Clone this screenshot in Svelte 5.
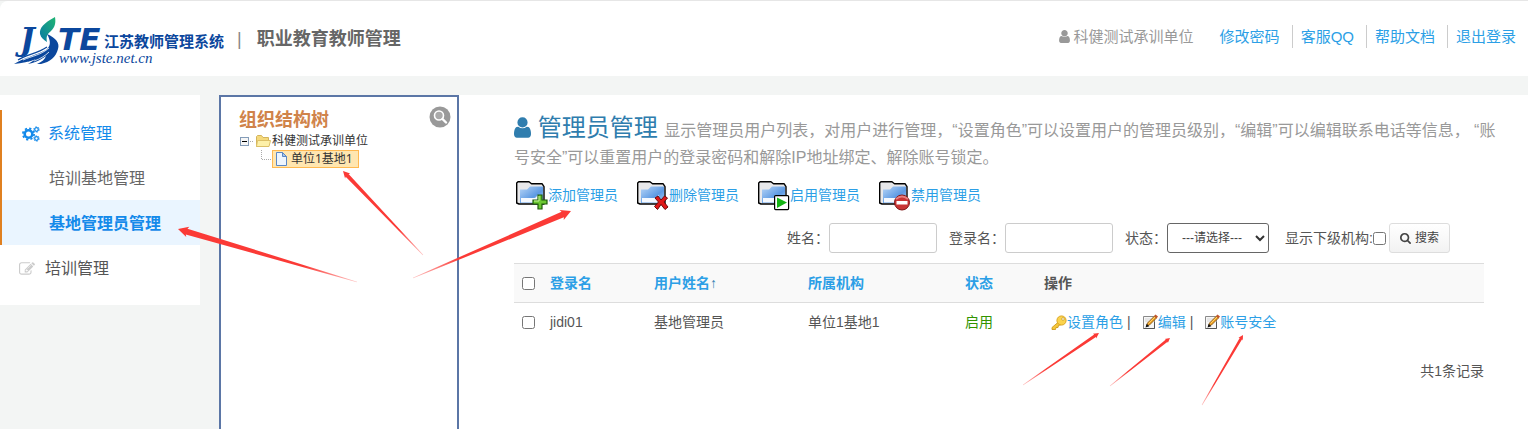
<script lang="ts">
    let keyword = $state("");
    let loginName = $state("");
    let status = $state("");
    let includeChildren = $state(false);

    const topLinks = ["修改密码", "客服QQ", "帮助文档", "退出登录"];

    const tools = [
        { label: "添加管理员", badge: "add" },
        { label: "删除管理员", badge: "remove" },
        { label: "启用管理员", badge: "play" },
        { label: "禁用管理员", badge: "stop" },
    ];

    let rows = $state([
        { login: "jidi01", name: "基地管理员", org: "单位1基地1", state: "启用", checked: false },
    ]);

    // tail, tip, shaft half width at the head
    const arrows = [
        { x1: 357, y1: 282, x2: 178, y2: 229, w: 3 },
        { x1: 423, y1: 255, x2: 343, y2: 171, w: 2 },
        { x1: 413, y1: 278, x2: 571, y2: 211, w: 3 },
        { x1: 1023, y1: 385, x2: 1099, y2: 333, w: 1.6 },
        { x1: 1110, y1: 386, x2: 1170, y2: 338, w: 1.4 },
        { x1: 1202, y1: 405, x2: 1243, y2: 335, w: 1.4 },
    ];

    function arrowPoints(a: { x1: number; y1: number; x2: number; y2: number; w: number }) {
        const len = Math.hypot(a.x2 - a.x1, a.y2 - a.y1);
        const ux = (a.x2 - a.x1) / len;
        const uy = (a.y2 - a.y1) / len;
        const at = (back: number, side: number) =>
            `${a.x2 - ux * back - uy * side},${a.y2 - uy * back + ux * side}`;
        const neck = a.w * 3;
        const barb = a.w * 3.4;
        return [
            at(len, 0.3), at(neck, a.w), at(barb, a.w * 1.8), at(0, 0),
            at(barb, -a.w * 1.8), at(neck, -a.w), at(len, -0.3),
        ].join(" ");
    }
</script>

{#snippet userIcon()}
    <svg class="user-icon" viewBox="0 128 1280 1536" aria-hidden="true">
        <path d="M1280 1399q0 109-62.5 187t-150.5 78h-854q-88 0-150.5-78t-62.5-187q0-85 8.5-160.5t31.5-152 58.5-131 94-89 134.5-34.5q131 128 313 128t313-128q76 0 134.5 34.5t94 89 58.5 131 31.5 152 8.5 160.5zm-256-887q0 159-112.5 271.5t-271.5 112.5-271.5-112.5-112.5-271.5 112.5-271.5 271.5-112.5 271.5 112.5 112.5 271.5z" />
    </svg>
{/snippet}

{#snippet noteIcon()}
    <svg class="small-icon" viewBox="0 0 16 16" aria-hidden="true">
        <path d="M1.500 2.500h10l1 1v11h-11z" fill="#f7f7f7" stroke="#8a8a8a" />
        <path d="M1.500 14.500h11V8" fill="none" stroke="#555" />
        <path d="M3 5h6M3 7h4" stroke="#d5d5d5" />
        <path d="M4.500 12l1-3 7-7 2 2-7 7z" fill="#f0a020" stroke="#7a4c10" stroke-width=".8" />
        <path d="M6.500 9.500l6.500-6.500" stroke="#ffd26a" />
        <path d="M3.500 13.500l1.200-3.800 2.600 2.600z" fill="#111" />
        <path d="M12 2l1.500-1.500 2.500 2-1.500 2z" fill="#c0562b" />
    </svg>
{/snippet}

<div class="page">
    <header>
        <svg class="logo" viewBox="0 0 212 54" role="img" aria-label="JSTE">
            <defs>
                <linearGradient id="leaf" x1="1" y1="0" x2="0" y2="1">
                    <stop offset="0" stop-color="#1fb573" />
                    <stop offset="1" stop-color="#0878a5" />
                </linearGradient>
            </defs>
            <text class="logo-j" x="6" y="36">J</text>
            <text class="logo-te" x="44" y="36">TE</text>
            <path d="M41 3C30 9 25 14 26 20c1 4 4 6 7 8-1-5 0-8 4-11 4-4 5-8 4-14z" fill="url(#leaf)" />
            <path d="M33 20c9 4 13 9 11 15-2 8-8 13-17 15h-4c5-2 8-5 9-8-7 5-12 7-18 8l8-5c-7 3-14 4-22 5 9-6 23-9 32-14 5-4 5-9 1-16z" fill="#0b479d" />
            <path d="M4 46c9-6 19-6 29-13M14 47c9-4 14-5 20-10" stroke="#0b479d" stroke-width="1.200" fill="none" />
            <path d="M9 46c9-4 18-5 26-12M20 47c6-2 11-5 15-9" stroke="#fff" stroke-width=".8" fill="none" />
            <text class="logo-name" x="90" y="33">江苏教师管理系统</text>
            <text class="logo-url" x="45" y="49">www.jste.net.cn</text>
        </svg>
        <span class="divider">|</span>
        <strong class="subtitle">职业教育教师管理</strong>
        <div class="top-bar">
            <span class="account">{@render userIcon()}科健测试承训单位</span>
            <nav class="top-links">
                {#each topLinks as link}
                    <a href="#top">{link}</a>
                {/each}
            </nav>
        </div>
    </header>

    <div class="main">
        <nav class="sidebar">
            <div class="group">
                <a class="item active" href="#system">
                    <svg class="cogs" viewBox="0 0 18 16" aria-hidden="true">
                        <g fill="none" stroke="currentColor">
                            <circle cx="6.500" cy="8" r="3.800" stroke-width="2.600" />
                            <circle cx="6.500" cy="8" r="5.600" stroke-width="1.800" stroke-dasharray="2.200" />
                            <circle cx="14.500" cy="3.500" r="1.800" stroke-width="1.300" />
                            <circle cx="14.500" cy="3.500" r="2.700" stroke-width="1" stroke-dasharray="1.400" />
                            <circle cx="14.500" cy="12.500" r="1.800" stroke-width="1.300" />
                            <circle cx="14.500" cy="12.500" r="2.700" stroke-width="1" stroke-dasharray="1.400" />
                        </g>
                    </svg>
                    系统管理
                </a>
                <a class="item sub" href="#base">培训基地管理</a>
                <a class="item sub current" href="#admins">基地管理员管理</a>
            </div>
            <a class="item train" href="#training">
                <svg class="pencil" viewBox="0 0 1792 1792" aria-hidden="true">
                    <path d="M888 1184l116-116-152-152-116 116v56h96v96h56zm440-720q-16-16-33 1l-350 350q-17 17-1 33t33-1l350-350q17-17 1-33zm80 594v190q0 119-84.5 203.5t-203.5 84.5h-832q-119 0-203.5-84.5t-84.5-203.5v-832q0-119 84.5-203.5t203.5-84.5h832q63 0 117 25 15 7 18 23 3 17-9 29l-49 49q-14 14-32 8-23-6-45-6h-832q-66 0-113 47t-47 113v832q0 66 47 113t113 47h832q66 0 113-47t47-113v-126q0-13 9-22l64-64q15-15 35-7t20 29zm-96-738l288 288-672 672h-288v-288zm444 132l-92 92-288-288 92-92q28-28 68-28t68 28l152 152q28 28 28 68t-28 68z" />
                </svg>
                培训管理
            </a>
        </nav>

        <aside class="tree">
            <div class="tree-head">
                <h2>组织结构树</h2>
                <button class="tree-search" aria-label="搜索">
                    <svg viewBox="0 0 22 22">
                        <circle cx="11" cy="11" r="10.500" fill="#999" />
                        <circle cx="10" cy="9.500" r="4.500" fill="#aaa" stroke="#fff" stroke-width="1.600" />
                        <path d="M13.500 13l3.500 3.500" stroke="#fff" stroke-width="2.400" stroke-linecap="round" />
                    </svg>
                </button>
            </div>
            <div class="node">
                <svg class="toggle" viewBox="0 0 15 16" aria-hidden="true">
                    <rect x="1.500" y="4.500" width="8" height="8" fill="#f6f6f6" stroke="#849cb8" />
                    <path d="M3 8.500h5" stroke="#000" />
                    <path d="M11 8.500h4" stroke="#aaa" stroke-dasharray="1" />
                </svg>
                <svg class="small-icon" viewBox="0 0 16 16" aria-hidden="true">
                    <path d="M1.500 13.500v-10l1-1h4l1.500 2h5.500v9z" fill="#f5d97c" stroke="#d3b45c" />
                    <path d="M1.500 13.500l1-6h13l-1.500 6z" fill="#fdf0a8" stroke="#dcc067" />
                </svg>
                <span>科健测试承训单位</span>
            </div>
            <div class="node child">
                <svg class="branch" viewBox="0 0 12 18" aria-hidden="true">
                    <path d="M1.500 0v9.500H12" fill="none" stroke="#aaa" stroke-dasharray="1" />
                </svg>
                <span class="selected">
                    <svg class="small-icon" viewBox="0 0 16 16" aria-hidden="true">
                        <path d="M3.500 1.500h6l4 4v9h-10z" fill="#eef5fd" stroke="#5b87c4" />
                        <path d="M9.500 1.500v4h4z" fill="#a9c8ec" stroke="#5b87c4" />
                    </svg>
                    单位1基地1
                </span>
            </div>
        </aside>

        <main>
            <h1>
                {@render userIcon()}
                管理员管理
                <small>显示管理员用户列表，对用户进行管理，“设置角色”可以设置用户的管理员级别，“编辑”可以编辑联系电话等信息， “账号安全”可以重置用户的登录密码和解除IP地址绑定、解除账号锁定。</small>
            </h1>

            <div class="tools">
                {#each tools as tool}
                    <a href="#tool">
                        <svg class="folder" viewBox="0 0 32 32" aria-hidden="true">
                            <defs>
                                <linearGradient id="blue-{tool.badge}" x1="0" y1="0" x2="1" y2="1">
                                    <stop offset="0" stop-color="#b7d5f7" />
                                    <stop offset=".6" stop-color="#5d9ae3" />
                                    <stop offset="1" stop-color="#a8cdf5" />
                                </linearGradient>
                            </defs>
                            <path d="M.700 24V4L2 2.700h11l2.500 2H26l2 3V25H3z" fill="#e8e8ea" stroke="#000" stroke-width="1.400" stroke-linejoin="round" />
                            <path d="M4 10.500h7l3-3h13V24H4z" fill="url(#blue-{tool.badge})" />
                            <path d="M5 19h14l3-3v7.500H5z" fill="#f5f9ff" />
                            {#if tool.badge === "add"}
                                <path d="M22 16h4v5h5v4h-5v5h-4v-5h-5v-4h5z" fill="#6cc832" stroke="#1d5d0b" stroke-width="1.200" />
                                <path d="M23 17v5h-5" fill="none" stroke="#c7f29d" />
                            {:else if tool.badge === "remove"}
                                <path d="M18 19l3-2 3 4 3.500-4 3 2-3.500 4 4 5-3 2.500-4-5-3.500 5-3-3 4-4.500z" fill="#e01818" stroke="#6d0909" />
                            {:else if tool.badge === "play"}
                                <rect x="16.600" y="16.600" width="14" height="14" rx="1" fill="#fff" stroke="#000" stroke-width="1.200" />
                                <path d="M19 18.500l10 5-10 5.500z" fill="#14b414" />
                            {:else}
                                <circle cx="23" cy="23.500" r="7.500" fill="#c93434" stroke="#7e1414" />
                                <path d="M17 20q6-5 12 0" stroke="#e58080" stroke-width="2" fill="none" />
                                <rect x="17.500" y="22" width="11" height="3.500" fill="#fff" />
                            {/if}
                        </svg>
                        {tool.label}
                    </a>
                {/each}
            </div>

            <form class="filters" onsubmit={(e) => e.preventDefault()}>
                <label for="name">姓名：</label>
                <input id="name" type="text" bind:value={keyword} />
                <label for="login">登录名：</label>
                <input id="login" type="text" bind:value={loginName} />
                <label for="status">状态：</label>
                <div class="select">
                    <select id="status" bind:value={status}>
                        <option value="">---请选择---</option>
                        <option value="on">启用</option>
                        <option value="off">禁用</option>
                    </select>
                    <svg class="chevron" viewBox="0 0 10 7" aria-hidden="true">
                        <path d="M1 1l4 4 4-4" fill="none" stroke="#333" stroke-width="2" />
                    </svg>
                </div>
                <label for="children">显示下级机构:</label>
                <input id="children" type="checkbox" bind:checked={includeChildren} />
                <button class="search">
                    <svg viewBox="0 0 1664 1792" aria-hidden="true">
                        <path d="M1152 832q0-185-131.500-316.500t-316.500-131.500-316.500 131.500-131.500 316.500 131.500 316.500 316.500 131.500 316.500-131.500 131.500-316.500zm512 832q0 52-38 90t-90 38q-54 0-90-38l-343-342q-179 124-399 124-143 0-273.500-55.500t-225-150-150-225-55.500-273.500 55.500-273.500 150-225 225-150 273.500-55.500 273.500 55.500 225 150 150 225 55.500 273.500q0 220-124 399l343 343q37 37 37 90z" />
                    </svg>
                    搜索
                </button>
            </form>

            <table>
                <thead>
                    <tr>
                        <th class="c-check"><input type="checkbox" aria-label="全选" /></th>
                        <th class="c-login"><a href="#sort">登录名</a></th>
                        <th class="c-name"><a href="#sort">用户姓名</a><span class="sort">↑</span></th>
                        <th class="c-org"><a href="#sort">所属机构</a></th>
                        <th class="c-state"><a href="#sort">状态</a></th>
                        <th>操作</th>
                    </tr>
                </thead>
                <tbody>
                    {#each rows as row}
                        <tr>
                            <td><input type="checkbox" aria-label={row.login} bind:checked={row.checked} /></td>
                            <td>{row.login}</td>
                            <td>{row.name}</td>
                            <td>{row.org}</td>
                            <td class="on">{row.state}</td>
                            <td>
                                <div class="actions">
                                    <a href="#role">
                                        <svg class="small-icon" viewBox="0 0 16 16" aria-hidden="true">
                                            <path d="M8 7.500L1 13.500v2h3.500l.5-2h2l.5-2 3-1z" fill="#f5c73c" stroke="#c8920f" stroke-width=".8" />
                                            <circle cx="10.500" cy="6.500" r="4.600" fill="#fbd34d" stroke="#d79f1a" stroke-width=".9" />
                                            <circle cx="12" cy="5" r="1.300" fill="#fff" stroke="#b8860b" stroke-width=".6" />
                                        </svg>设置角色</a>
                                    <span>|</span>
                                    <a href="#edit">{@render noteIcon()}编辑</a>
                                    <span>|</span>
                                    <a href="#safe">{@render noteIcon()}账号安全</a>
                                </div>
                            </td>
                        </tr>
                    {/each}
                </tbody>
            </table>
            <p class="total">共{rows.length}条记录</p>
        </main>
    </div>

    <svg class="arrows" aria-hidden="true">
        {#each arrows as a, i}
            <linearGradient id="fade-{i}" gradientUnits="userSpaceOnUse" x1={a.x1} y1={a.y1} x2={a.x2} y2={a.y2}>
                <stop offset="0" stop-color="#fb3a36" stop-opacity=".3" />
                <stop offset=".3" stop-color="#fb3a36" />
            </linearGradient>
            <polygon points={arrowPoints(a)} fill="url(#fade-{i})" />
        {/each}
    </svg>
</div>

<style>
    :global(body) {
        background: #f3f5f4;
        overflow: hidden;
    }

    .page {
        position: relative;
        display: flex;
        flex-direction: column;
        min-height: 100vh;
        box-sizing: border-box;
        border-top: 1px solid #e6e6e6;
        color: #555;
        font-family: "Liberation Sans", "Noto Sans CJK SC", sans-serif;
        font-size: 14px;
        line-height: 20px;
    }

    a {
        color: #2c9fe6;
        text-decoration: none;
    }

    svg {
        flex: none;
    }

    .user-icon {
        fill: currentColor;
    }

    .small-icon {
        width: 16px;
        height: 16px;
    }

    input[type="checkbox"] {
        width: 13px;
        height: 13px;
        margin: 0;
    }

    header {
        display: flex;
        align-items: center;
        height: 75px;
        padding: 0 12px 0 14px;
        background: #fff;
        border-top-left-radius: 8px;
    }

    .logo {
        width: 212px;
        height: 54px;
        margin-top: 4px;
    }

    .logo-j {
        font: italic bold 31px "DejaVu Serif", serif;
        fill: #0b479d;
    }

    .logo-te {
        font: italic bold 31px "DejaVu Sans", sans-serif;
        fill: #0b479d;
    }

    .logo-name {
        font: bold 15px "Noto Sans CJK SC", sans-serif;
        fill: #0b479d;
    }

    .logo-url {
        font: italic 15px "Liberation Serif", serif;
        fill: #0b479d;
    }

    .divider {
        padding: 0 15px 0 11px;
        color: #888;
        font-size: 18px;
    }

    .subtitle {
        flex: 1;
        color: #666;
        font-size: 18px;
    }

    .top-bar {
        display: flex;
        padding-bottom: 4px;
        font-size: 15px;
        line-height: 23px;
    }

    .account {
        display: flex;
        align-items: center;
        gap: 4px;
        color: #999;
    }

    .account .user-icon {
        width: 11px;
        height: 13px;
    }

    .top-links {
        display: flex;
        padding-left: 18px;
    }

    .top-links a {
        padding: 0 12px 0 8px;
        border-right: 1px solid #ccc;
    }

    .top-links a:last-child {
        padding-right: 0;
        border: none;
    }

    .main {
        display: flex;
        flex: 1;
        align-items: stretch;
        padding-top: 19px;
    }

    .sidebar {
        flex: none;
        align-self: flex-start;
        width: 200px;
        padding: 15px 0;
        background: #fff;
        font-size: 16px;
    }

    .group {
        border-left: 2px solid #e08020;
    }

    .item {
        display: flex;
        align-items: center;
        box-sizing: border-box;
        height: 45px;
        padding-top: 2px;
        padding-left: 20px;
        gap: 8px;
        color: #555;
    }

    .item.active {
        color: #148aea;
    }

    .item.sub {
        padding-left: 47px;
        color: #666;
    }

    .item.current {
        background: #eaf5ff;
        color: #148aea;
        font-weight: bold;
    }

    .item.train {
        padding-left: 19px;
        gap: 10px;
    }

    .cogs {
        width: 18px;
        height: 16px;
    }

    .pencil {
        width: 16px;
        height: 16px;
        fill: #ccc;
    }

    .tree {
        flex: none;
        box-sizing: border-box;
        width: 240px;
        margin-left: 19px;
        padding: 9px 6px 0 18px;
        border: 2px solid #5b76a6;
        border-bottom: none;
        background: #fff;
        color: #333;
        font-family: "Noto Sans", "Noto Sans CJK SC", sans-serif;
        font-size: 12px;
    }

    .tree-head {
        display: flex;
        justify-content: space-between;
        height: 26px;
    }

    .tree h2 {
        margin: 0;
        color: #d0834a;
        font-size: 18px;
        line-height: 26px;
    }

    .tree-search {
        width: 22px;
        height: 22px;
        padding: 0;
        border: none;
        background: none;
    }

    .tree-search svg {
        display: block;
    }

    .node {
        display: flex;
        align-items: center;
        height: 18px;
        line-height: 16px;
        gap: 1px;
    }

    .toggle {
        width: 15px;
        height: 16px;
    }

    .node.child {
        padding-left: 21px;
        gap: 0;
    }

    .branch {
        width: 12px;
        height: 18px;
    }

    .selected {
        display: flex;
        gap: 2px;
        padding-right: 5px;
        border: 1px solid #ffb951;
        background: #ffe6b0;
    }

    main {
        flex: 1;
        min-width: 0;
        padding: 21px 44px 0 55px;
        background: #fff;
    }

    h1 {
        margin: 0 -16px 0 0;
        color: #2f7dae;
        font-size: 24px;
        font-weight: normal;
        line-height: 24px;
    }

    h1 .user-icon {
        width: 17px;
        height: 21px;
        vertical-align: -2px;
    }

    h1 small {
        color: #999;
        font-size: 16px;
        line-height: 24px;
    }

    .tools {
        display: flex;
        gap: 19px;
        padding: 9px 0 0 2px;
    }

    .tools a {
        display: flex;
        align-items: center;
        line-height: 30px;
    }

    .folder {
        width: 32px;
        height: 32px;
    }

    .filters {
        display: flex;
        align-items: center;
        justify-content: flex-end;
        margin: 12px 34px 10px 0;
    }

    .filters input[type="text"] {
        box-sizing: border-box;
        width: 108px;
        height: 30px;
        margin-right: 12px;
        border: 1px solid #ccc;
        border-radius: 3px;
    }

    .select {
        position: relative;
        margin-right: 16px;
    }

    .select select {
        display: block;
        box-sizing: border-box;
        width: 102px;
        height: 30px;
        padding: 0 14px;
        border: 1px solid #666;
        border-radius: 3px;
        appearance: none;
        background: #fff;
        color: #444;
        font: inherit;
        font-size: 12px;
    }

    .chevron {
        position: absolute;
        top: 12px;
        right: 4px;
        width: 10px;
        height: 7px;
        pointer-events: none;
    }

    .search {
        display: flex;
        align-items: center;
        gap: 4px;
        height: 30px;
        margin-left: 3px;
        padding: 0 10px;
        border: 1px solid #ddd;
        border-radius: 3px;
        background: linear-gradient(#fff, #f2f2f2);
        color: #444;
        font: inherit;
        font-size: 12px;
    }

    .search svg {
        width: 11px;
        height: 12px;
        fill: #444;
    }

    table {
        width: 100%;
        table-layout: fixed;
        border-collapse: collapse;
        text-align: left;
    }

    th,
    td {
        height: 38px;
        padding: 0 8px;
    }

    thead tr {
        border-top: 1px solid #ddd;
        border-bottom: 1px solid #ddd;
        background: #f9f9f9;
    }

    th input,
    td input {
        display: block;
    }

    .c-check {
        width: 12px;
    }

    .c-login {
        width: 88px;
    }

    .c-name {
        width: 138px;
    }

    .c-org {
        width: 141px;
    }

    .c-state {
        width: 63px;
    }

    .sort {
        color: #2c7fb0;
        font-weight: normal;
    }

    .on {
        color: #319400;
    }

    .actions {
        display: flex;
        padding-left: 7px;
        gap: 4px;
    }

    .actions a {
        display: flex;
        align-items: center;
    }

    .actions span {
        margin-right: 7px;
    }

    .total {
        margin: 20px 0 0;
        text-align: right;
    }

    .arrows {
        position: absolute;
        top: -1px;
        left: 0;
        width: 100%;
        height: 100%;
        pointer-events: none;
    }
</style>
